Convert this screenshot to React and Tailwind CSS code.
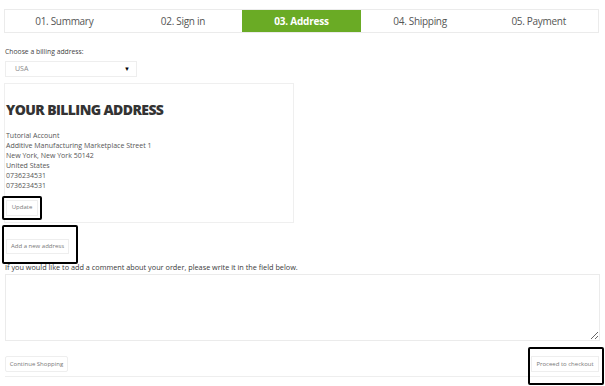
import React from 'react';

const steps = ['01. Summary', '02. Sign in', '03. Address', '04. Shipping', '05. Payment'];

const addressLines = [
    'Tutorial Account',
    'Additive Manufacturing Marketplace Street 1',
    'New York, New York 50142',
    'United States',
    '0736234531',
    '0736234531',
];

// black callout frame drawn over a button
const Callout = ({ className }) => (
    <span className={`pointer-events-none absolute rounded-[2px] border-2 border-black ${className}`} />
);

const App = () => {
    return (
        <div className="w-[605px] h-[386px] overflow-hidden bg-white font-['Open_Sans',sans-serif] text-[#555]">
            <div className="ml-[4px] mt-[9px] flex h-[24px] w-[595px] border border-[#ebebeb]">
                {steps.map((s, i) => (
                    <div
                        key={s}
                        className={
                            i === 2
                                ? 'flex flex-1 items-center justify-center bg-[#6aab25] text-[10px] font-bold tracking-[-0.2px] text-white'
                                : 'flex flex-1 items-center justify-center text-[10px] tracking-[-0.3px] text-[#555]'
                        }
                    >
                        {s}
                    </div>
                ))}
            </div>

            <div className="px-[5px]">
                <div className="mt-[14px] text-[6.8px] leading-[10px] text-[#444]">Choose a billing address:</div>
                <div className="mt-[4px] flex h-[16px] w-[132px] items-center justify-between border border-[#eeeeee] pl-[9px] pr-[6px] text-[7px] text-[#888]">
                    <span>USA</span>
                    <span className="text-[6px] text-black">▼</span>
                </div>

                <div className="-ml-[1px] mt-[6px] h-[140px] w-[290px] border border-[#efefef] pt-[16px]">
                    <h2 className="pl-[1px] text-[14px] font-extrabold leading-[20px] tracking-[-0.6px] text-[#333]">YOUR BILLING ADDRESS</h2>
                    <div className="mt-[11px] pl-[1px] text-[7px] leading-[10px] text-[#555]">
                        {addressLines.map((l, i) => (
                            <div key={i}>{l}</div>
                        ))}
                    </div>
                    <button className="relative ml-[1px] mt-[6px] h-[16px] w-[32px] border border-[#eeeeee] bg-white text-[6px] text-[#777]">
                        Update
                        <Callout className="-left-[5px] -top-[5px] h-[24px] w-[40px]" />
                    </button>
                </div>

                <button className="relative ml-[1px] mt-[16px] h-[15px] w-[63px] border border-[#eeeeee] bg-white text-[6px] text-[#777]">
                    Add a new address
                    <Callout className="-left-[5px] -top-[15px] h-[39px] w-[76px]" />
                </button>

                <div className="mt-[8px] text-[7.3px] leading-[10px] text-[#3a3a3a]">
                    If you would like to add a comment about your order, please write it in the field below.
                </div>
                <textarea className="mt-[2px] block h-[67px] w-[595px] resize-y border border-[#ebebeb] outline-none" />

                <div className="mt-[15px] flex justify-between">
                    <button className="h-[16px] w-[63px] rounded-[2px] border border-[#eeeeee] bg-white text-[6px] text-[#777]">
                        Continue Shopping
                    </button>
                    <button className="relative mr-[1px] h-[16px] w-[68px] border border-[#eeeeee] bg-white text-[6px] text-[#777]">
                        Proceed to checkout
                        <Callout className="-left-[4px] -top-[10px] h-[38px] w-[76px]" />
                    </button>
                </div>
                <div className="mt-[4px] h-px w-[595px] bg-[#eeeeee]" />
            </div>
        </div>
    );
};

export default App;
